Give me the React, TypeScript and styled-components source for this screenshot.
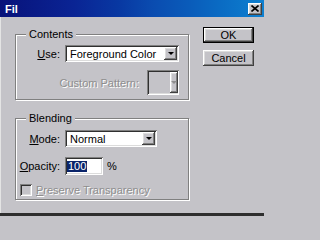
import styled, { createGlobalStyle } from "styled-components";

const GlobalStyle = createGlobalStyle`
    html, body {
        margin: 0;
        padding: 0;
        background: #c4c3c8;
    }
    * {
        box-sizing: border-box;
    }
`;

const raised = `
    box-shadow: inset -1px -1px #404040, inset 1px 1px #ffffff,
        inset -2px -2px #808080, inset 2px 2px #dcdcdc;
`;

const sunken = `
    box-shadow: inset 1px 1px #808080, inset -1px -1px #ffffff,
        inset 2px 2px #303030, inset -2px -2px #dcdcdc;
`;

const Window = styled.div`
    width: 264px;
    height: 216px;
    display: flex;
    flex-direction: column;
    background: #c4c3c8;
    border-bottom: 3px solid #2e2e2e;
    font-family: "Liberation Sans", Arial, sans-serif;
    font-size: 11px;
    color: #000;
    overflow: hidden;
`;

const TitleBar = styled.div`
    height: 17px;
    flex-shrink: 0;
    display: flex;
    align-items: center;
    justify-content: space-between;
    padding: 0 2px 0 5px;
    background: linear-gradient(
        to right,
        #08127a 0%,
        #0a2494 28%,
        #0838a2 45%,
        #0a4cb0 58%,
        #0a5cba 72%,
        #0a6cc4 84%,
        #0e80d0 100%
    );
`;

const Title = styled.span`
    color: #fff;
    font-weight: bold;
    font-size: 11px;
`;

const CloseButton = styled.div`
    width: 14px;
    height: 12px;
    display: flex;
    align-items: center;
    justify-content: center;
    background: #c4c3c8;
    ${raised}
`;

const Body = styled.div`
    flex: 1;
    display: flex;
    align-items: flex-start;
    padding: 10px 0 0 14px;
    border-left: 1px solid #e4e4e4;
`;

const LeftColumn = styled.div`
    width: 174px;
    display: flex;
    flex-direction: column;
`;

const RightColumn = styled.div`
    width: 51px;
    margin-left: 14px;
    display: flex;
    flex-direction: column;
    gap: 7px;
`;

const Group = styled.div<{ $top: number; $height: number }>`
    position: relative;
    margin-top: ${(p) => p.$top}px;
    height: ${(p) => p.$height}px;
    border: 1px solid #808080;
    box-shadow: 1px 1px 0 #ffffff, inset 1px 1px 0 #ffffff;
    display: flex;
    flex-direction: column;
`;

const GroupLabel = styled.span`
    position: absolute;
    top: -7px;
    left: 10px;
    padding: 0 3px;
    background: #c4c3c8;
    line-height: 12px;
`;

const FieldRow = styled.div<{ $top: number }>`
    display: grid;
    grid-template-columns: 44px auto;
    column-gap: 5px;
    align-items: center;
    margin-top: ${(p) => p.$top}px;
`;

const Label = styled.span<{ $disabled?: boolean }>`
    text-align: right;
    white-space: nowrap;
    color: ${(p) => (p.$disabled ? "#8e8e8e" : "#000")};
    text-shadow: ${(p) => (p.$disabled ? "1px 1px 0 #ffffff" : "none")};
`;

const Key = styled.span`
    text-decoration: underline;
`;

const PatternRow = styled.div`
    display: flex;
    justify-content: flex-end;
    align-items: center;
    gap: 8px;
    margin-top: 8px;
    padding-right: 9px;
`;

const Combo = styled.div<{ $width: number }>`
    width: ${(p) => p.$width}px;
    height: 17px;
    display: flex;
    align-items: center;
    padding: 2px;
    background: #fff;
    ${sunken}
`;

const ComboText = styled.span`
    flex: 1;
    padding-left: 3px;
    white-space: nowrap;
    overflow: hidden;
`;

const DropButton = styled.div<{ $width: number }>`
    width: ${(p) => p.$width}px;
    height: 100%;
    display: flex;
    align-items: center;
    justify-content: center;
    background: #c4c3c8;
    ${raised}
`;

const Arrow = styled.span<{ $disabled?: boolean }>`
    width: 0;
    height: 0;
    border-left: 3px solid transparent;
    border-right: 3px solid transparent;
    border-top: 3px solid ${(p) => (p.$disabled ? "#8e8e8e" : "#000")};
`;

const PatternBox = styled.div`
    width: 32px;
    height: 25px;
    display: flex;
    justify-content: flex-end;
    padding: 2px 1px 2px 2px;
    background: #c4c3c8;
    ${sunken}
`;

const TextField = styled.div`
    width: 38px;
    height: 18px;
    display: flex;
    align-items: center;
    padding: 2px;
    background: #fff;
    ${sunken}
`;

const Selection = styled.span`
    background: #0a246a;
    color: #fff;
    padding: 0 1px;
    line-height: 11px;
`;

const Inline = styled.div`
    display: flex;
    align-items: center;
    gap: 4px;
`;

const CheckRow = styled.div`
    display: flex;
    align-items: center;
    gap: 4px;
    margin-top: 9px;
    padding-left: 4px;
`;

const Checkbox = styled.div`
    width: 12px;
    height: 12px;
    background: #c4c3c8;
    ${sunken}
`;

const Button = styled.div<{ $default?: boolean }>`
    height: 16px;
    display: flex;
    align-items: center;
    justify-content: center;
    background: #c4c3c8;
    border: ${(p) => (p.$default ? "1px solid #000" : "none")};
    ${raised}
`;

export default function App() {
    return (
        <>
            <GlobalStyle />
            <Window>
                <TitleBar>
                    <Title>Fil</Title>
                    <CloseButton>
                        <svg width="8" height="7" viewBox="0 0 8 7">
                            <path d="M0.5 0.5 L7.5 6.5 M7.5 0.5 L0.5 6.5" stroke="#000" strokeWidth="1.6" />
                        </svg>
                    </CloseButton>
                </TitleBar>
                <Body>
                    <LeftColumn>
                        <Group $top={7} $height={66}>
                            <GroupLabel>Contents</GroupLabel>
                            <FieldRow $top={10}>
                                <Label><Key>U</Key>se:</Label>
                                <Combo $width={114}>
                                    <ComboText>Foreground Color</ComboText>
                                    <DropButton $width={13}><Arrow /></DropButton>
                                </Combo>
                            </FieldRow>
                            <PatternRow>
                                <Label $disabled>Custom Pattern:</Label>
                                <PatternBox>
                                    <DropButton $width={8}><Arrow $disabled /></DropButton>
                                </PatternBox>
                            </PatternRow>
                        </Group>
                        <Group $top={18} $height={82}>
                            <GroupLabel>Blending</GroupLabel>
                            <FieldRow $top={11}>
                                <Label><Key>M</Key>ode:</Label>
                                <Combo $width={92}>
                                    <ComboText>Normal</ComboText>
                                    <DropButton $width={13}><Arrow /></DropButton>
                                </Combo>
                            </FieldRow>
                            <FieldRow $top={10}>
                                <Label><Key>O</Key>pacity:</Label>
                                <Inline>
                                    <TextField><Selection>100</Selection></TextField>
                                    <span>%</span>
                                </Inline>
                            </FieldRow>
                            <CheckRow>
                                <Checkbox />
                                <Label $disabled><Key>P</Key>reserve Transparency</Label>
                            </CheckRow>
                        </Group>
                    </LeftColumn>
                    <RightColumn>
                        <Button $default>OK</Button>
                        <Button>Cancel</Button>
                    </RightColumn>
                </Body>
            </Window>
        </>
    );
}
